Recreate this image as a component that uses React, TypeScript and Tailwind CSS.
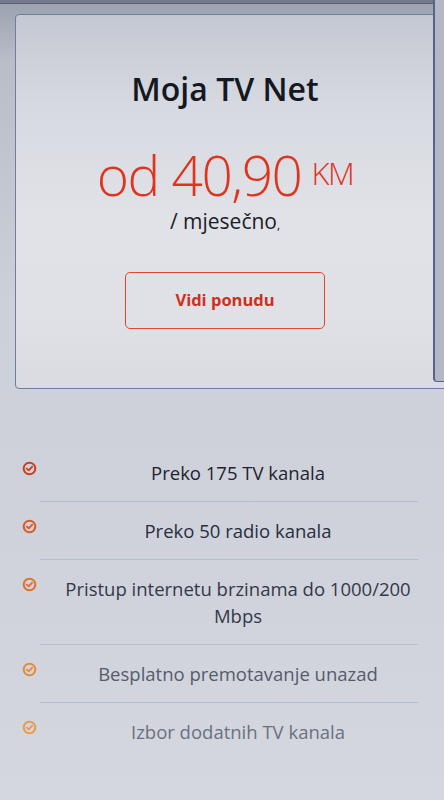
import React from "react";

const items: { lines: string[]; text: string; icon: string }[] = [
  { lines: ["Preko 175 TV kanala"], text: "text-[#1e2330]", icon: "#cf3f1e" },
  { lines: ["Preko 50 radio kanala"], text: "text-[#282e3d]", icon: "#dc5a27" },
  { lines: ["Pristup internetu brzinama do 1000/200", "Mbps"], text: "text-[#323949]", icon: "#e2702d" },
  { lines: ["Besplatno premotavanje unazad"], text: "text-[#545c6d]", icon: "#e78a3c" },
  { lines: ["Izbor dodatnih TV kanala"], text: "text-[#697183]", icon: "#ea9a4b" },
];

function CheckCircle({ color }: { color: string }) {
  return (
    <svg width="15" height="15" viewBox="0 0 16 16" fill="none">
      <circle cx="8" cy="8" r="6.2" stroke={color} strokeWidth="2.2" />
      <path d="M5.1 8.1 L7.2 10 L10.9 6.1" stroke={color} strokeWidth="2" strokeLinecap="round" strokeLinejoin="round" />
    </svg>
  );
}

export default function App() {
  return (
    <div
      className="relative w-[444px] h-[800px] overflow-hidden bg-[linear-gradient(180deg,#9ba1af_0px,#b9bdc8_60px,#ccd0d8_300px,#d0d3db_600px,#d5d7de_800px)]"
      style={{ fontFamily: '"Open Sans", "Noto Sans", sans-serif' }}
    >
      <div className="h-[4px] bg-[#737a8b] border-b border-[#5b6275]" />
      <div className="pt-[10px] pl-[15px]">
        <div className="w-[440px] rounded-[4px] border border-[#6f7ca3] bg-[linear-gradient(180deg,#c4c8d2_0px,#d6d9e0_90px,#e0e2e7_200px,#dfe1e6_300px,#d9dbe1_375px)] flex flex-col items-center pr-[20px] pt-[54px] pb-[59px]">
          <h1 className="text-[32px] leading-[40px] font-semibold text-[#15181f]">Moja TV Net</h1>
          <div className="mt-[36px] flex items-start text-[#e0341f]">
            <span className="text-[55px] leading-[60px] font-light tracking-[-1.5px]">od 40,90</span>
            <span className="ml-[10px] mt-[8px] text-[31px] leading-[40px] font-light tracking-[-1.5px]">KM</span>
          </div>
          <div className="mt-[2px] text-[21px] leading-[28px] text-[#1a1d25]">/ mjesečno<span className="text-[12px]">,</span></div>
          <div className="mt-[33px] w-[200px] h-[57px] rounded-[5px] border-[1.5px] border-[#e0472e] flex items-center justify-center text-[16.5px] font-bold text-[#cf2f1c]">
            Vidi ponudu
          </div>
        </div>
      </div>
      <div className="absolute left-[433px] top-0 w-[20px] h-[382px] border-l-2 border-b border-[#56648c] rounded-bl-[4px] bg-[#b3b8c4]" />

      <ul className="mt-[55px] pr-[26px]">
        {items.map((it, i) => (
          <li key={i} className="flex items-start">
            <div className="w-[40px] flex justify-end pr-[3px] pt-[17px]">
              <CheckCircle color={it.icon} />
            </div>
            <div className={`flex-1 pl-[18px] py-[15px] text-center text-[18.5px] leading-[27px] ${it.text} ${i < items.length - 1 ? "border-b border-[#b4bdd3]" : ""}`}>
              {it.lines.map((l, j) => (
                <div key={j}>{l}</div>
              ))}
            </div>
          </li>
        ))}
      </ul>
    </div>
  );
}
